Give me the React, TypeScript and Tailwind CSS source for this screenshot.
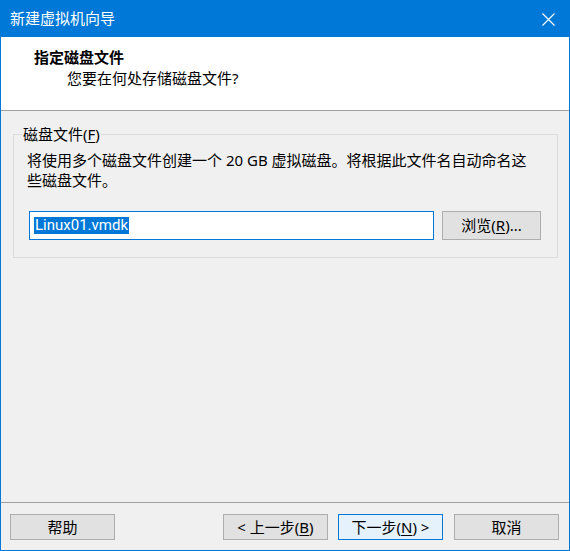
import React from "react";

const btn =
  "h-[26px] w-[105px] border border-[#adadad] bg-[#e1e1e1] flex items-center justify-center text-[15px] leading-none text-black";

export default function App() {
  return (
    <div className="w-[570px] h-[551px] flex flex-col bg-[#f0f0f0] text-black font-['Noto_Sans','Noto_Sans_CJK_SC',sans-serif] text-[15px]">
      <div className="h-[37px] shrink-0 bg-[#0078d7] flex items-center justify-between pl-[10px] pr-[15px] text-white">
        <span className="leading-none">新建虚拟机向导</span>
        <svg width="13" height="13" viewBox="0 0 13 13" className="mt-[1px]">
          <path d="M0.5 0.5 L12.5 12.5 M12.5 0.5 L0.5 12.5" stroke="#ffffff" strokeWidth="1.1" fill="none" />
        </svg>
      </div>
      <div className="flex-1 flex flex-col border-x border-b border-[#0078d7]">
        <div className="h-[74px] shrink-0 bg-white border-b border-[#a0a0a0] flex flex-col pt-[10px]">
          <div className="pl-[33px] font-bold leading-[20px]">指定磁盘文件</div>
          <div className="pl-[66px] leading-[20px] mt-[1px]">您要在何处存储磁盘文件?</div>
        </div>
        <div className="flex-1">
          <div className="relative mt-[23px] ml-[12px] mr-[11px] h-[124px] border border-[#dcdcdc] pl-[13px] pt-[15px]">
            <span className="absolute left-[8px] -top-[11px] bg-[#f0f0f0] px-[1px] leading-[20px]">
              磁盘文件(<span className="underline underline-offset-2">F</span>)
            </span>
            <div className="leading-[20px]">
              将使用多个磁盘文件创建一个 20 GB 虚拟磁盘。将根据此文件名自动命名这
              <br />
              些磁盘文件。
            </div>
            <div className="flex mt-[21px]">
              <div className="ml-[2px] w-[405px] h-[29px] border border-[#0078d7] bg-white flex items-center pl-[4px]">
                <span className="bg-[#0078d7] text-white leading-[17px] h-[17px] px-[1px] font-['Roboto',sans-serif]">Linux01.vmdk</span>
              </div>
              <div className="ml-[8px] w-[99px] h-[29px] border border-[#adadad] bg-[#e1e1e1] flex items-center justify-center leading-none">
                浏览(<span className="underline underline-offset-2">R</span>)...
              </div>
            </div>
          </div>
        </div>
        <div className="h-[48px] shrink-0 border-t border-[#a0a0a0] flex items-start pt-[11px] pl-[9px] pr-[10px]">
          <div className={btn}>帮助</div>
          <div className="flex-1" />
          <div className={btn}>
            &lt; 上一步(<span className="underline underline-offset-2">B</span>)
          </div>
          <div className={btn + " ml-[10px] !border-[#0078d7] !bg-[#e5f1fb]"}>
            下一步(<span className="underline underline-offset-2">N</span>) &gt;
          </div>
          <div className={btn + " ml-[11px]"}>取消</div>
        </div>
      </div>
    </div>
  );
}
